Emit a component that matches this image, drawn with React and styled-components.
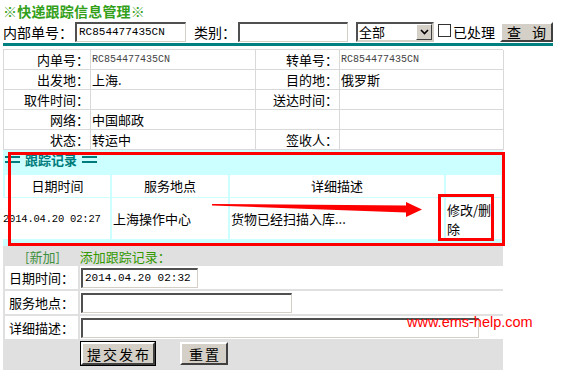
import React from 'react'
import styled, { createGlobalStyle } from 'styled-components'

const GlobalStyle = createGlobalStyle`
   body {
      margin: 0;
      background: #fff;
      font-family: "Noto Sans CJK SC", "DejaVu Sans", sans-serif;
      color: #000;
   }
`

const infoRows = [
   ['内单号：', 'RC854477435CN', '转单号：', 'RC854477435CN'],
   ['出发地：', '上海.', '目的地：', '俄罗斯'],
   ['取件时间：', '', '送达时间：', ''],
   ['网络：', '中国邮政', '', ''],
   ['状态：', '转运中', '签收人：', ''],
]

function isCode(v) {
   return /^[A-Z0-9]+$/.test(v)
}

function App() {
   return (
      <Page>
         <GlobalStyle />
         <Title>※快递跟踪信息管理※</Title>
         <SearchBar>
            <Label>内部单号：</Label>
            <TextInput w={111} defaultValue="RC854477435CN" />
            <Label>类别：</Label>
            <TextInput w={110} />
            <FakeSelect>
               <span>全部</span>
               <SelectArrow>
                  <svg width="9" height="6" viewBox="0 0 9 6">
                     <path d="M1 1 L4.5 4.5 L8 1" stroke="#000" strokeWidth="1.6" fill="none" />
                  </svg>
               </SelectArrow>
            </FakeSelect>
            <Check type="checkbox" />
            <Label>已处理</Label>
            <Button w={53} h={20} wide>查 询</Button>
         </SearchBar>
         <TealRule />

         <InfoTable>
            {infoRows.map((r, i) => (
               <React.Fragment key={i}>
                  <InfoLabel>{r[0]}</InfoLabel>
                  <InfoValue mono={isCode(r[1])}>{r[1]}</InfoValue>
                  <InfoLabel>{r[2]}</InfoLabel>
                  <InfoValue mono={isCode(r[3])}>{r[3]}</InfoValue>
               </React.Fragment>
            ))}
         </InfoTable>

         <TraceSection>
            <TraceTitle>
               <Equals />
               <span>跟踪记录</span>
               <Equals />
            </TraceTitle>
            <TraceGrid>
               <HeadCell>日期时间</HeadCell>
               <HeadCell>服务地点</HeadCell>
               <HeadCell>详细描述</HeadCell>
               <HeadCell />
               <DataCell mono>2014.04.20 02:27</DataCell>
               <DataCell>上海操作中心</DataCell>
               <DataCell>货物已经扫描入库...</DataCell>
               <DataCell small>修改/删除</DataCell>
            </TraceGrid>
            <RedFrame />
            <EditFrame />
            <Arrow width="220" height="20" viewBox="0 0 220 20">
               <polygon points="0,2 194,3.5 194,0 210,7.5 194,15 194,10.5 0,3.5" fill="#f00" />
            </Arrow>
         </TraceSection>

         <FormSection>
            <FormHead>
               <NewLink>[新加]</NewLink>
               <span>添加跟踪记录：</span>
            </FormHead>
            <FormGrid>
               <FormLabel>日期时间：</FormLabel>
               <FormField><TextInput w={117} mono defaultValue="2014.04.20 02:32" /></FormField>
               <FormLabel>服务地点：</FormLabel>
               <FormField><TextInput w={211} /></FormField>
               <FormLabel>详细描述：</FormLabel>
               <FormField><TextInput w={398} /></FormField>
               <span />
               <ButtonRow>
                  <Button w={74} h={23} dark>提交发布</Button>
                  <Button w={48} h={23}>重置</Button>
               </ButtonRow>
            </FormGrid>
         </FormSection>

         <Watermark>www.ems-help.com</Watermark>
      </Page>
   )
}

const Page = styled.div`
   position: relative;
   width: 555px;
   padding: 3px 0 0 3px;
`

const Title = styled.div`
   font-size: 14px;
   font-weight: bold;
   line-height: 17px;
   color: #33a01a;
   letter-spacing: 0.2px;
`

const SearchBar = styled.div`
   display: flex;
   align-items: center;
   height: 21px;
   margin-top: 1px;
`

const Label = styled.span`
   font-size: 14px;
   line-height: 20px;
   margin-right: 2px;
   white-space: nowrap;
`

const TextInput = styled.input`
   box-sizing: border-box;
   width: ${p => p.w}px;
   height: 20px;
   margin: 0 8px 0 0;
   padding: 0 2px;
   background: #fff;
   border: 1px solid #d4d0c8;
   border-top: 2px solid #505050;
   border-left: 2px solid #505050;
   font-family: "Liberation Mono", monospace;
   font-size: 11px;
   color: #000;
   outline: none;
`

const FakeSelect = styled.div`
   box-sizing: border-box;
   width: 78px;
   height: 20px;
   display: flex;
   align-items: center;
   justify-content: space-between;
   border: 2px solid #505050;
   border-right-color: #d4d0c8;
   border-bottom-color: #d4d0c8;
   background: #fff;
   font-size: 13px;
   padding-left: 1px;
   margin-right: 4px;
`

const SelectArrow = styled.div`
   width: 16px;
   height: 16px;
   display: flex;
   align-items: center;
   justify-content: center;
   background: #d4d0c8;
   border: 1px solid #fff;
   border-right-color: #404040;
   border-bottom-color: #404040;
   box-sizing: border-box;
`

const Check = styled.input`
   appearance: none;
   width: 13px;
   height: 13px;
   margin: 0 2px 2px 0;
   border: 1px solid #333;
   background: #fff;
`

const Button = styled.button`
   box-sizing: border-box;
   width: ${p => p.w}px;
   height: ${p => p.h}px;
   margin-left: 3px;
   padding: 0;
   background: #d4d0c8;
   border: 2px solid #fff;
   border-right-color: #404040;
   border-bottom-color: #404040;
   outline: ${p => (p.dark ? '1px solid #000' : 'none')};
   font-family: "Noto Sans CJK SC", sans-serif;
   font-size: 14px;
   line-height: 16px;
   letter-spacing: ${p => (p.wide ? '4px' : '2px')};
   text-indent: ${p => (p.wide ? '4px' : '2px')};
   color: #000;
`

const TealRule = styled.div`
   width: 550px;
   height: 3px;
   margin-top: 1px;
   background: #008080;
`

const InfoTable = styled.div`
   display: grid;
   grid-template-columns: 87px 165px 84px 164px;
   width: 500px;
   margin-top: 3px;
   border-top: 1px solid #d9d9d9;
   border-left: 1px solid #d9d9d9;
   box-sizing: border-box;
`

const InfoLabel = styled.div`
   height: 20px;
   box-sizing: border-box;
   border-right: 1px solid #d9d9d9;
   border-bottom: 1px solid #d9d9d9;
   text-align: right;
   font-size: 13px;
   line-height: 19px;
   padding-right: 1px;
`

const InfoValue = styled(InfoLabel)`
   text-align: left;
   padding-left: 1px;
   font-family: ${p => (p.mono ? '"Liberation Mono", monospace' : 'inherit')};
   font-size: ${p => (p.mono ? '10px' : '13px')};
   color: ${p => (p.mono ? '#444' : '#000')};
`

const TraceSection = styled.div`
   position: relative;
   width: 500px;
   height: 96px;
   box-sizing: border-box;
   background: #ccffff;
   padding: 0 2px;
`

const TraceTitle = styled.div`
   display: flex;
   align-items: center;
   gap: 5px;
   height: 25px;
   padding-bottom: 6px;
   box-sizing: border-box;
   font-size: 13px;
   font-weight: bold;
   color: #007b7b;
`

const Equals = styled.span`
   display: inline-block;
   width: 15px;
   height: 3px;
   border-top: 2px solid #007b7b;
   border-bottom: 2px solid #007b7b;
`

const TraceGrid = styled.div`
   display: grid;
   grid-template-columns: 105px 116px 214px 55px;
   grid-template-rows: 22px 41px;
   gap: 1px 2px;
`

const HeadCell = styled.div`
   background: #fff;
   text-align: center;
   font-size: 13px;
   line-height: 22px;
`

const DataCell = styled.div`
   background: #fff;
   display: flex;
   align-items: center;
   font-family: ${p => (p.mono ? '"Liberation Mono", monospace' : 'inherit')};
   font-size: ${p => (p.mono ? '10.5px' : '13px')};
   margin-left: ${p => (p.mono ? '-2px' : '0')};
   padding-left: ${p => (p.mono ? '0' : '1px')};
   line-height: ${p => (p.small ? '19px' : '16px')};
   white-space: ${p => (p.mono ? 'nowrap' : 'normal')};
   letter-spacing: ${p => (p.mono ? '-0.2px' : '0')};
   overflow: hidden;
`

const RedFrame = styled.div`
   position: absolute;
   left: 5px;
   top: 2px;
   width: 497px;
   height: 94px;
   box-sizing: border-box;
   border: 3px solid #f00;
   pointer-events: none;
`

const EditFrame = styled.div`
   position: absolute;
   left: 435px;
   top: 44px;
   width: 56px;
   height: 47px;
   box-sizing: border-box;
   border: 3px solid #f00;
`

const Arrow = styled.svg`
   position: absolute;
   left: 209px;
   top: 52px;
`

const FormSection = styled.div`
   width: 500px;
   box-sizing: border-box;
   background: #e0e0e0;
   padding: 0 2px 2px 2px;
`

const FormHead = styled.div`
   display: flex;
   height: 20px;
   align-items: center;
   font-size: 13px;
   color: #339900;
`

const NewLink = styled.span`
   color: #3d8f3d;
   margin: 0 20px 0 20px;
`

const FormGrid = styled.div`
   display: grid;
   grid-template-columns: 73px 423px;
   grid-template-rows: 23px 23px 23px 27px;
   gap: 2px 2px;
`

const FormLabel = styled.div`
   background: #fff;
   text-align: center;
   font-size: 13px;
   line-height: 23px;
`

const FormField = styled.div`
   background: #fff;
   display: flex;
   align-items: center;
   padding-left: 1px;
`

const ButtonRow = styled.div`
   display: flex;
   align-items: flex-start;
   gap: 22px;
   margin-left: -2px;
   padding-top: 1px;
`

const Watermark = styled.div`
   position: absolute;
   left: 407px;
   top: 314px;
   font-family: "Liberation Sans", sans-serif;
   font-size: 14.5px;
   color: #f00;
   pointer-events: none;
`

export default App
